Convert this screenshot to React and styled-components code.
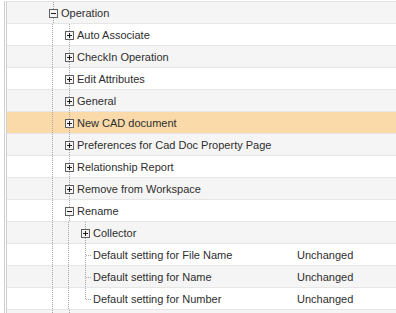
import React from "react";
import styled, { createGlobalStyle } from "styled-components";

const Global = createGlobalStyle`
  html, body { margin: 0; padding: 0; background: #ffffff; overflow: hidden; }
  body { font-family: "Liberation Sans", Arial, sans-serif; }
`;

const Tree = styled.div`
  margin: 1px 0 0 4px;
  border-top: 1px solid #e2e2e2;
  border-left: 3px double #cfcfcf;
  display: flex;
  flex-direction: column;
`;

const Row = styled.div`
  display: grid;
  grid-template-columns: 290px 1fr;
  height: 21px;
  border-bottom: 1px solid #e6e6e6;
  background: ${(p) => (p.$selected ? "#fadaa8" : p.$alt ? "#f5f5f5" : "#ffffff")};
  font-size: 11px;
  line-height: 23px;
  color: #2e2e2e;
`;

const NameCell = styled.div`
  display: flex;
  align-items: stretch;
  padding-left: 37px;
  white-space: nowrap;
  overflow: hidden;
`;

const Indent = styled.svg`
  flex: none;
  width: 16px;
  height: 21px;
  display: block;
`;

const Label = styled.span`
  padding-left: 1px;
`;

const ValueCell = styled.div`
  white-space: nowrap;
`;

const LINE = "#a8a8a8";

function AncestorLine({ show }) {
  return (
    <Indent viewBox="0 0 16 21" shapeRendering="crispEdges">
      {show && <line x1="8.5" y1="0" x2="8.5" y2="21" stroke={LINE} strokeDasharray="1 1" />}
    </Indent>
  );
}

function Elbow({ kind, last }) {
  return (
    <Indent viewBox="0 0 16 21" shapeRendering="crispEdges">
      <line x1="9.5" y1="0" x2="9.5" y2={last ? 12 : 21} stroke={LINE} strokeDasharray="1 1" />
      {kind === "leaf" && (
        <line x1="10" y1="11.5" x2="16" y2="11.5" stroke={LINE} strokeDasharray="1 1" />
      )}
      {kind !== "leaf" && (
        <g>
          <rect x="5.5" y="7.5" width="8" height="8" fill="#f3f3f3" stroke="#5f5f5f" />
          <line x1="7" y1="11.5" x2="12" y2="11.5" stroke="#1e1e1e" />
          {kind === "plus" && <line x1="9.5" y1="9" x2="9.5" y2="14" stroke="#1e1e1e" />}
        </g>
      )}
    </Indent>
  );
}

const rows = [
  { label: "Operation", anc: [], kind: "minus" },
  { label: "Auto Associate", anc: [true], kind: "plus" },
  { label: "CheckIn Operation", anc: [true], kind: "plus" },
  { label: "Edit Attributes", anc: [true], kind: "plus" },
  { label: "General", anc: [true], kind: "plus" },
  { label: "New CAD document", anc: [true], kind: "plus", selected: true },
  { label: "Preferences for Cad Doc Property Page", anc: [true], kind: "plus" },
  { label: "Relationship Report", anc: [true], kind: "plus" },
  { label: "Remove from Workspace", anc: [true], kind: "plus" },
  { label: "Rename", anc: [true], kind: "minus" },
  { label: "Collector", anc: [true, true], kind: "plus" },
  { label: "Default setting for File Name", anc: [true, true], kind: "leaf", value: "Unchanged" },
  { label: "Default setting for Name", anc: [true, true], kind: "leaf", value: "Unchanged" },
  { label: "Default setting for Number", anc: [true, true], kind: "leaf", last: true, value: "Unchanged" },
  { label: "", anc: [true], kind: "plus" },
];

export default function App() {
  return (
    <>
      <Global />
      <Tree>
        {rows.map((r, i) => (
          <Row key={i} $alt={i % 2 === 0} $selected={r.selected}>
            <NameCell>
              {r.anc.map((a, j) => (
                <AncestorLine key={j} show={a} />
              ))}
              <Elbow kind={r.kind} last={r.last} />
              <Label>{r.label}</Label>
            </NameCell>
            <ValueCell>{r.value || ""}</ValueCell>
          </Row>
        ))}
      </Tree>
    </>
  );
}
